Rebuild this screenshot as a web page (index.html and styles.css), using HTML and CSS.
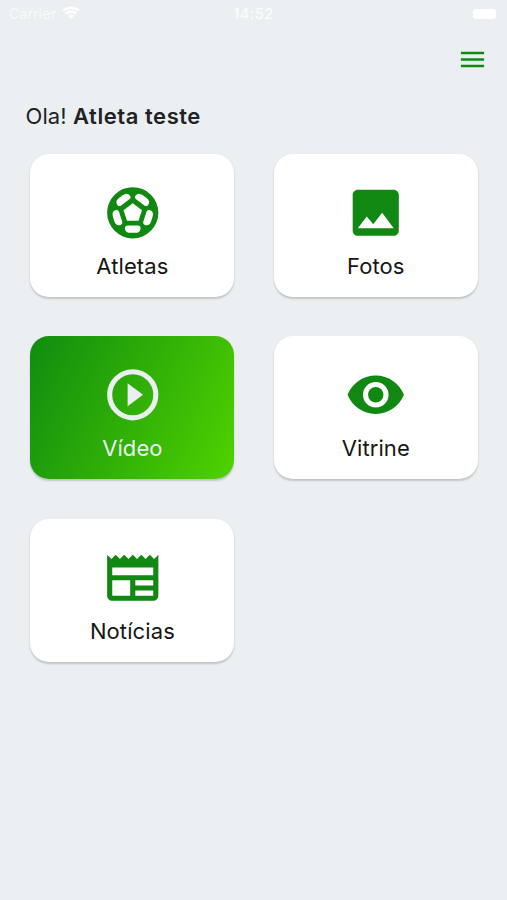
FILE: index.html
```html
<!DOCTYPE html>
<html lang="pt">
<head>
<meta charset="utf-8">
<title>Atletas</title>
<link rel="stylesheet" href="styles.css">
</head>
<body>
<div class="status">
  <div class="carrier"><span>Carrier</span>
    <svg class="wifi" viewBox="0 0 18 13"><path d="M1.2 4.8a11 11 0 0 1 15.6 0M3.9 7.6a7.2 7.2 0 0 1 10.2 0" fill="none" stroke="currentColor" stroke-width="2.3"/><path d="M9 13l-3-3a4.3 4.3 0 0 1 6 0z" fill="currentColor"/></svg>
  </div>
  <div class="time">14:52</div>
  <div class="battery"></div>
</div>
<header class="toolbar">
  <svg class="menu" viewBox="0 0 24 24"><path d="M3 6h18v2H3zM3 11h18v2H3zM3 16h18v2H3z"/></svg>
</header>
<h1 class="greeting">Ola! <b>Atleta teste</b></h1>
<main class="grid">
  <a class="card">
    <svg class="icon" viewBox="0 0 24 24"><circle cx="12" cy="12" r="10"/>
      <path class="cut" d="M12 8.300l3.600 2.700-1.350 4.100h-4.500L8.400 11z"/>
      <g class="cut">
        <path id="panel" d="M10 17h4q1.050 0 1.050 1q0 1.850-2.250 1.850h-1.600q-2.250 0-2.250-1.850q0-1 1.050-1z"/>
        <use href="#panel" transform="rotate(72 12 12)"/>
        <use href="#panel" transform="rotate(144 12 12)"/>
        <use href="#panel" transform="rotate(216 12 12)"/>
        <use href="#panel" transform="rotate(288 12 12)"/>
      </g>
    </svg>
    <span class="label">Atletas</span>
  </a>
  <a class="card">
    <svg class="icon" viewBox="0 0 24 24"><path d="M21 19V5c0-1.100-.9-2-2-2H5c-1.100 0-2 .9-2 2v14c0 1.100.9 2 2 2h14c1.100 0 2-.9 2-2zM8.500 13.500l2.500 3.010L14.500 12l4.500 6H5l3.500-4.500z"/></svg>
    <span class="label">Fotos</span>
  </a>
  <a class="card active">
    <svg class="icon" viewBox="0 0 24 24"><path d="M10 16.500l6-4.500-6-4.500z"/><circle class="ring" cx="12" cy="12" r="9"/></svg>
    <span class="label">Vídeo</span>
  </a>
  <a class="card">
    <svg class="icon" viewBox="0 0 24 24"><path fill-rule="evenodd" d="M12 4.500C7 4.500 2.730 7.610 1 12c1.730 4.390 6 7.500 11 7.500s9.270-3.110 11-7.500c-1.730-4.390-6-7.500-11-7.500zM12 17a5 5 0 1 1 0-10 5 5 0 0 1 0 10z"/><circle cx="12" cy="12" r="3"/></svg>
    <span class="label">Vitrine</span>
  </a>
  <a class="card">
    <svg class="icon" viewBox="0 0 24 24"><path fill-rule="evenodd" d="M22 3l-1.670 1.670L18.670 3 17 4.670 15.330 3l-1.660 1.670L12 3l-1.670 1.670L8.670 3 7 4.670 5.330 3 3.670 4.670 2 3v16c0 1.100.9 2 2 2h16c1.100 0 2-.9 2-2V3zM11 19H4v-6h7v6zm9 0h-7v-2h7v2zm0-4h-7v-2h7v2zm0-4H4V8h16v3z"/></svg>
    <span class="label">Notícias</span>
  </a>
</main>
</body>
</html>
```
FILE: styles.css
```css
* { box-sizing: border-box; }
body {
  margin: 0;
  min-height: 900px;
  background: #ebeff2;
  font-family: Inter, "Liberation Sans", sans-serif;
  color: #202224;
}
.status {
  display: grid;
  grid-template-columns: 1fr auto 1fr;
  height: 27px;
  padding: 0 11px 0 9px;
  align-items: center;
  color: #fff;
}
.carrier { display: flex; align-items: center; gap: 6px; font-size: 14px; letter-spacing: 0.2px; color: #f8fafb; }
.wifi { width: 18px; height: 13px; margin-top: -3px; color: #fff; }
.time { font-size: 14.5px; font-weight: 600; letter-spacing: 0.4px; padding-left: 2px; color: #fafcfc; }
.battery { justify-self: end; width: 23px; height: 10px; border-radius: 3px; background: #fff; }
.toolbar { display: flex; justify-content: flex-end; padding: 17px 19px 0 0; }
.menu { display: block; width: 31px; height: 31px; fill: #128a12; }
.greeting {
  margin: 26px 0 0 25.500px;
  font-size: 22px;
  line-height: 30px;
  font-weight: 400;
  letter-spacing: 0.1px;
}
.greeting b { font-weight: 600; letter-spacing: 0.55px; }
.grid {
  display: grid;
  grid-template-columns: repeat(2, 204px);
  grid-auto-rows: 143.200px;
  gap: 39.300px 39.400px;
  padding: 22.800px 0 0 30.400px;
}
.card {
  display: flex;
  flex-direction: column;
  align-items: center;
  padding-top: 28px;
  border-radius: 19px;
  background: #fff;
  box-shadow: 0 1.500px 2px rgba(0, 0, 0, 0.18);
}
.icon { width: 61.500px; height: 61.500px; fill: #118811; }
.icon .cut { fill: #fff; }
.icon .ring { fill: none; stroke: currentColor; stroke-width: 2; }
.label { margin-top: 7.300px; font-size: 22px; line-height: 30px; letter-spacing: 0.1px; color: #161616; }
.active { background: linear-gradient(115deg, #108c10, #50d200); color: #ebeff2; }
.active .icon { fill: currentColor; }
.active .label { color: inherit; }
```
